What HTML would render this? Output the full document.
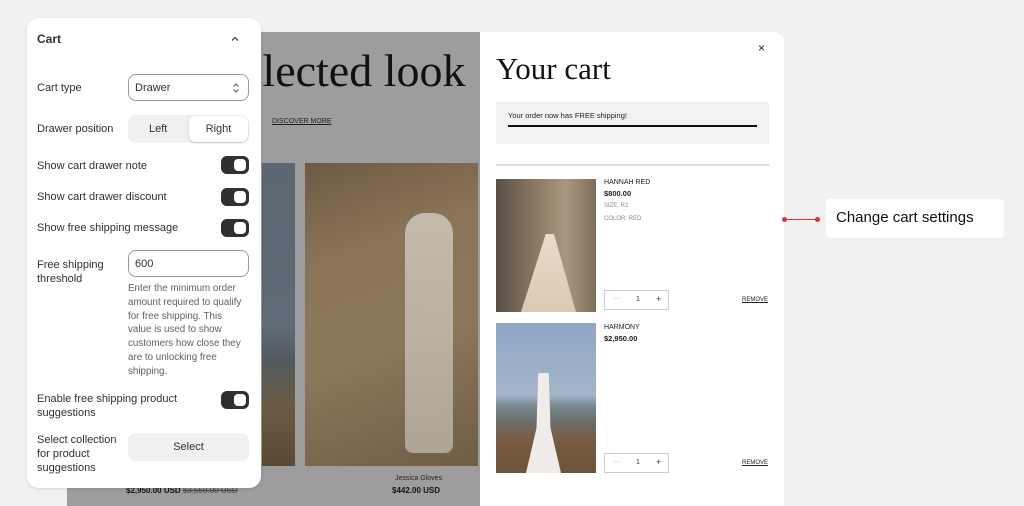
<!DOCTYPE html>
<html><head><style>
*{box-sizing:border-box;margin:0;padding:0}
body{width:1024px;height:506px;background:#f1f1f1;position:relative;overflow:hidden;font-family:"Liberation Sans",sans-serif;color:#303030}
.abs{position:absolute}
.page{left:67px;top:32px;width:420px;height:474px;background:#9d9d9d}
.serif{font-family:"Liberation Serif",serif}
.panel{left:27px;top:18px;width:234px;height:470px;background:#fff;border-radius:12px;box-shadow:0 1px 3px rgba(0,0,0,.12)}
.lbl{font-size:11px;color:#303030;position:absolute;left:10px;line-height:14px}
.tog{position:absolute;left:194px;width:28px;height:18px;background:#303030;border-radius:6px}
.tog:after{content:"";position:absolute;right:3px;top:3px;width:12px;height:12px;background:#fff;border-radius:4px}
.drawer{left:480px;top:32px;width:304px;height:474px;background:#fff;border-radius:0 10px 0 0}
.sm{font-size:7px;color:#222}
.qty{position:absolute;width:65px;height:20px;border:1px solid #ccc;font-size:7px;color:#333}
</style></head><body>
<div class="abs page">
 <div class="abs serif" style="left:175px;top:12px;font-size:46px;color:#111;white-space:nowrap">elected look</div>
 <div class="abs" style="left:205px;top:86px;font-size:7px;color:#222;text-decoration:underline">DISCOVER MORE</div>
 <div class="abs" style="left:195px;top:131px;width:33px;height:303px;background:linear-gradient(#5d6772 0%,#5f6a76 55%,#525a5e 65%,#6a5b45 80%,#5a4a35 100%)"></div>
 <div class="abs" style="left:238px;top:131px;width:173px;height:303px;background:linear-gradient(160deg,#6e5a44 0%,#8b7559 30%,#8a7659 60%,#6f5d46 100%)">
  <div class="abs" style="left:100px;top:50px;width:48px;height:240px;background:linear-gradient(#cfc7ba,#b8b0a4);border-radius:20px 20px 8px 8px;opacity:.85"></div>
 </div>
 <div class="abs" style="left:59px;top:454px;font-size:8px;color:#111;font-weight:bold">$2,950.00 USD <span style="font-weight:normal;text-decoration:line-through;color:#444">$3,550.00 USD</span></div>
 <div class="abs" style="left:328px;top:443px;font-size:7px;color:#222">Jessica Gloves</div>
 <div class="abs" style="left:325px;top:454px;font-size:8px;color:#111;font-weight:bold">$442.00 USD</div>
</div>

<div class="abs panel">
 <div class="abs" style="left:10px;top:14px;font-size:12px;font-weight:bold;color:#303030">Cart</div>
 <svg class="abs" style="left:203px;top:17px" width="10" height="8" viewBox="0 0 10 8"><path d="M2 5.5L5 2.5L8 5.5" fill="none" stroke="#444" stroke-width="1.3"/></svg>
 <div class="lbl" style="top:63px">Cart type</div>
 <div class="abs" style="left:101px;top:56px;width:121px;height:27px;border:1px solid #999;border-radius:8px;font-size:11px;padding:7px 6px">Drawer
  <svg class="abs" style="right:8px;top:7px" width="8" height="12" viewBox="0 0 8 12"><path d="M1.5 4.5L4 2L6.5 4.5M1.5 7.5L4 10L6.5 7.5" fill="none" stroke="#555" stroke-width="1"/></svg></div>
 <div class="lbl" style="top:104px">Drawer position</div>
 <div class="abs" style="left:101px;top:97px;width:121px;height:28px;background:#f0f0f0;border-radius:8px;font-size:11px">
  <div class="abs" style="left:21px;top:8px">Left</div>
  <div class="abs" style="left:61px;top:1px;width:59px;height:26px;background:#fff;border-radius:7px;box-shadow:0 1px 2px rgba(0,0,0,.2);text-align:center;padding-top:7px">Right</div>
 </div>
 <div class="lbl" style="top:141px">Show cart drawer note</div><div class="tog" style="top:138px"></div>
 <div class="lbl" style="top:172px">Show cart drawer discount</div><div class="tog" style="top:170px"></div>
 <div class="lbl" style="top:203px">Show free shipping message</div><div class="tog" style="top:201px"></div>
 <div class="lbl" style="top:240px">Free shipping<br>threshold</div>
 <div class="abs" style="left:101px;top:232px;width:121px;height:27px;border:1px solid #999;border-radius:8px;font-size:11px;padding:7px 6px">600</div>
 <div class="abs" style="left:101px;top:264px;white-space:nowrap;font-size:9.8px;line-height:13.8px;color:#616161">Enter the minimum order<br>amount required to qualify<br>for free shipping. This<br>value is used to show<br>customers how close they<br>are to unlocking free<br>shipping.</div>
 <div class="lbl" style="top:374px">Enable free shipping product<br>suggestions</div><div class="tog" style="top:373px"></div>
 <div class="lbl" style="top:415px">Select collection<br>for product<br>suggestions</div>
 <div class="abs" style="left:101px;top:415px;width:121px;height:28px;background:#f0f0f0;border-radius:8px;font-size:11px;text-align:center;padding-top:8px">Select</div>
</div>

<div class="abs drawer">
 <div class="abs" style="left:278px;top:9px;font-size:12px;color:#222">×</div>
 <div class="abs serif" style="left:16px;top:19px;font-size:31px;color:#111">Your cart</div>
 <div class="abs" style="left:16px;top:70px;width:273px;height:42px;background:#f2f2f2">
  <div class="abs" style="left:12px;top:9px;font-size:7.5px;color:#222">Your order now has FREE shipping!</div>
  <div class="abs" style="left:12px;top:23px;width:249px;height:2px;background:#111"></div>
 </div>
 <div class="abs" style="left:16px;top:132px;width:273px;height:2px;background:#ddd"></div>
 <div class="abs" style="left:16px;top:147px;width:100px;height:133px;background:linear-gradient(90deg,#5a5048,#8a7a62 40%,#a99880 70%,#7d6e5a)">
  <div class="abs" style="left:25px;top:55px;width:55px;height:78px;background:linear-gradient(#e8dccb,#d9c9b2);clip-path:polygon(45% 0,60% 0,100% 100%,0 100%)"></div></div>
 <div class="abs sm" style="left:124px;top:147px">HANNAH RED</div>
 <div class="abs sm" style="left:124px;top:157px;font-weight:bold;font-size:7.5px">$800.00</div>
 <div class="abs sm" style="left:124px;top:171px;color:#888;font-size:6px">SIZE: R2</div>
 <div class="abs sm" style="left:124px;top:184px;color:#888;font-size:6px">COLOR: RED</div>
 <div class="qty" style="left:124px;top:258px"><span class="abs" style="left:8px;top:4px;color:#ccc">—</span><span class="abs" style="left:31px;top:5px">1</span><span class="abs" style="left:51px;top:3px;font-size:9px">+</span></div>
 <div class="abs sm" style="left:262px;top:265px;font-size:6px;text-decoration:underline">REMOVE</div>
 <div class="abs" style="left:16px;top:291px;width:100px;height:150px;background:linear-gradient(#8fa6c6 0%,#a4b4c8 48%,#7a8a92 55%,#6a6e6a 65%,#7a5a3e 80%,#6a543a 100%)">
  <div class="abs" style="left:30px;top:50px;width:35px;height:100px;background:#efecea;clip-path:polygon(35% 0,65% 0,70% 55%,100% 100%,0 100%,30% 55%)"></div></div>
 <div class="abs sm" style="left:124px;top:292px">HARMONY</div>
 <div class="abs sm" style="left:124px;top:302px;font-weight:bold;font-size:7.5px">$2,950.00</div>
 <div class="qty" style="left:124px;top:421px"><span class="abs" style="left:8px;top:4px;color:#ccc">—</span><span class="abs" style="left:31px;top:5px">1</span><span class="abs" style="left:51px;top:3px;font-size:9px">+</span></div>
 <div class="abs sm" style="left:262px;top:428px;font-size:6px;text-decoration:underline">REMOVE</div>
</div>

<div class="abs" style="left:782px;top:217px;width:5px;height:5px;border-radius:50%;background:#e0303a"></div>
<div class="abs" style="left:785px;top:219px;width:33px;height:1px;background:#e0303a"></div>
<div class="abs" style="left:815px;top:217px;width:5px;height:5px;border-radius:50%;background:#e0303a"></div>
<div class="abs" style="left:826px;top:199px;width:178px;height:39px;background:#fff;border-radius:4px;font-size:15px;color:#111;padding:10px 0 0 10px">Change cart settings</div>
</body></html>
